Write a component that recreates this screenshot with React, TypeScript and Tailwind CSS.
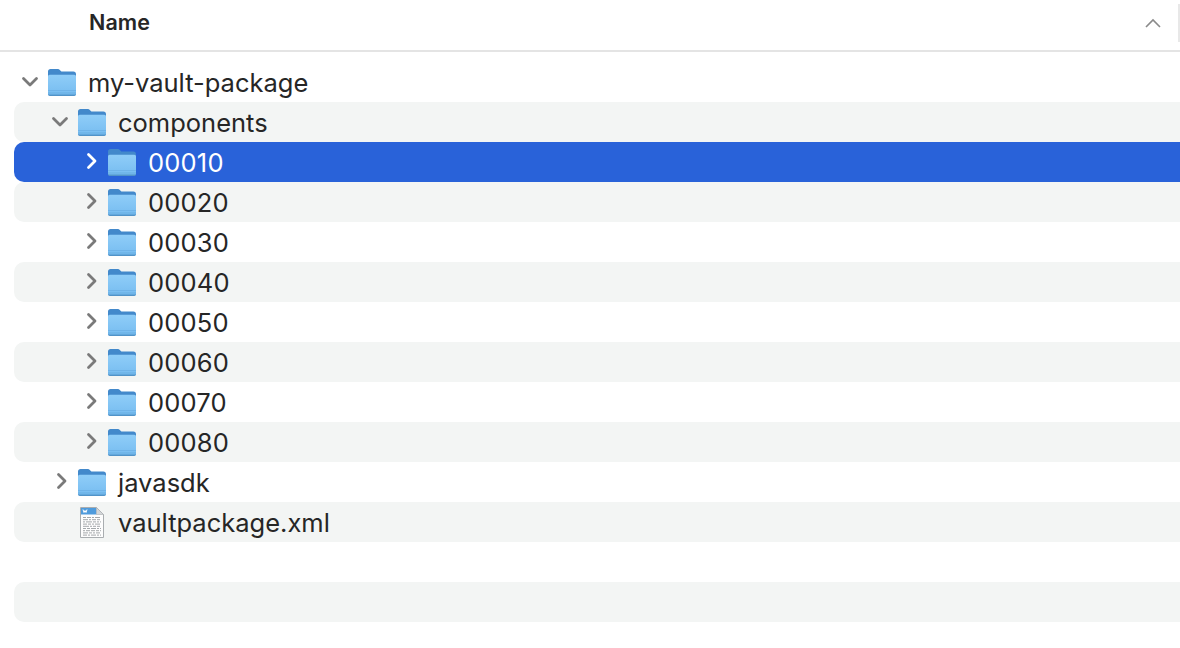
import React from 'react';

const FolderIcon: React.FC<{ id: string }> = ({ id }) => (
  <svg width="32" height="30" viewBox="0 0 32 30" className="shrink-0">
    <defs>
      <linearGradient id={id} x1="0" y1="0" x2="0" y2="1">
        <stop offset="0" stopColor="#8fcdf8" />
        <stop offset="1" stopColor="#76bcf0" />
      </linearGradient>
    </defs>
    <path d="M2 4.500C2 3 3 2 4.500 2h7c1 0 1.600.3 2.300 1l1.600 1.600h12c1.600 0 2.600 1 2.600 2.600v19.300c0 1.200-.8 2-2 2H4c-1.200 0-2-.8-2-2z" fill="#4389cb" />
    <path d="M2 9.500C2 8.400 2.700 7.700 3.800 7.700h24.400c1.100 0 1.800.7 1.800 1.800v17c0 1.200-.8 2-2 2H4c-1.200 0-2-.8-2-2z" fill={`url(#${id})`} />
    <rect x="2" y="23" width="28" height="1" fill="#6fb3e8" />
    <rect x="2" y="25.500" width="28" height="1" fill="#69ade2" />
    <path d="M2 27.500h28c0 .7-.8 1.500-2 1.500H4c-1.200 0-2-.8-2-1.500z" fill="#5193c8" />
  </svg>
);

const fileLines = [
  '3 1 4 1 2 1 5 1',
  '5 1 2 1 4 1 3 1',
  '2 1 6 1 3 1 2 1',
  '4 1 3 1 2 1 5 1',
  '6 1 2 1 3 1 3 1',
  '3 1 3 1 5 1 2 1',
  '2 1 4 1 4 1 3 1',
  '5 1 3 1 2 1 4 1',
  '4 1 2 1 5 1 2 1',
];

const FileIcon: React.FC = () => (
  <svg width="26" height="33" viewBox="0 0 26 33" className="shrink-0">
    <path d="M1.500 1.500h16l7 7v23h-23z" fill="#fdfdfd" stroke="#a9adb0" strokeWidth="1" />
    <path d="M2 2h15.500v6.500H2z" fill="#4f9bdc" />
    <path d="M17.500 1.500l7 7h-7z" fill="#d4d7d9" stroke="#a9adb0" strokeWidth="0.6" />
    <path d="M4 3.500l1 3 1-2 1 2 1-3" fill="none" stroke="#fff" strokeWidth="1" />
    {fileLines.map((dash, i) => (
      <path key={i} d={`M4 ${11.500 + i * 2.200}h18`} stroke="#9a9ea1" strokeWidth="0.9" strokeDasharray={dash} />
    ))}
  </svg>
);

const Disclosure: React.FC<{ dir: 'open' | 'closed'; selected?: boolean }> = ({ dir, selected }) => (
  <svg width="18" height="18" viewBox="0 0 18 18" className={`shrink-0 ${dir === 'closed' ? 'translate-x-[2px] -translate-y-[1px]' : ''}`}>
    <path
      d={dir === 'open' ? 'M2.500 5.500 9 12l6.500-6.500' : 'M5.500 2.500 12 9l-6.500 6.500'}
      fill="none"
      stroke={selected ? '#ffffff' : '#7a7a7a'}
      strokeWidth="2.800"
      strokeLinecap="round"
      strokeLinejoin="round"
    />
  </svg>
);

type Row = {
  name: string;
  indent: string;
  kind?: 'folder' | 'file';
  dir?: 'open' | 'closed';
  selected?: boolean;
  numeric?: boolean;
};

const rows: Row[] = [
  { name: 'my-vault-package', indent: 'pl-[7px]', dir: 'open' },
  { name: 'components', indent: 'pl-[37px]', dir: 'open' },
  { name: '00010', indent: 'pl-[67px]', dir: 'closed', selected: true, numeric: true },
  { name: '00020', indent: 'pl-[67px]', dir: 'closed', numeric: true },
  { name: '00030', indent: 'pl-[67px]', dir: 'closed', numeric: true },
  { name: '00040', indent: 'pl-[67px]', dir: 'closed', numeric: true },
  { name: '00050', indent: 'pl-[67px]', dir: 'closed', numeric: true },
  { name: '00060', indent: 'pl-[67px]', dir: 'closed', numeric: true },
  { name: '00070', indent: 'pl-[67px]', dir: 'closed', numeric: true },
  { name: '00080', indent: 'pl-[67px]', dir: 'closed', numeric: true },
  { name: 'javasdk', indent: 'pl-[37px]', dir: 'closed' },
  { name: 'vaultpackage.xml', indent: 'pl-[37px]', kind: 'file' },
];

const App: React.FC = () => {
  return (
    <div className="w-[1180px] h-[648px] overflow-hidden bg-white font-['Inter',sans-serif] text-[#262626]">
      <div className="h-[52px] flex items-center justify-between border-b-2 border-[#e4e4e4] pl-[89px]">
        <span className="text-[21.500px] font-semibold tracking-[0.1px] -mt-[6px]">Name</span>
        <div className="flex items-center self-stretch">
          <svg width="16" height="10" viewBox="0 0 16 10" className="mr-[17px] -mt-[4px]">
            <path d="M1 9l7-7 7 7" fill="none" stroke="#8a8a8a" strokeWidth="1.600" />
          </svg>
          <div className="w-[2px] h-[38px] mb-[4px] bg-[#e8e8e8]" />
        </div>
      </div>

      <div className="pt-[10px] pl-[14px]">
        {rows.map((row, i) => (
          <div
            key={row.name}
            className={`h-[40px] flex items-center rounded-l-[10px] ${row.indent} ${
              row.selected ? 'bg-[#2962d9] text-white' : i % 2 === 1 ? 'bg-[#f3f5f4]' : ''
            }`}
          >
            <div className="w-[18px] flex justify-center">
              {row.dir && <Disclosure dir={row.dir} selected={row.selected} />}
            </div>
            <div className="ml-[7px] w-[32px] flex justify-center">
              {row.kind === 'file' ? <FileIcon /> : <FolderIcon id={`folder-${i}`} />}
            </div>
            <span
              className={`ml-[10px] mt-[2px] text-[25.500px] leading-none ${
                row.numeric ? 'tracking-[0.2px]' : 'tracking-[0px]'
              }`}
            >
              {row.name}
            </span>
          </div>
        ))}
        <div className="h-[40px]" />
        <div className="h-[40px] rounded-l-[10px] bg-[#f3f5f4]" />
      </div>
    </div>
  );
};

export default App;
